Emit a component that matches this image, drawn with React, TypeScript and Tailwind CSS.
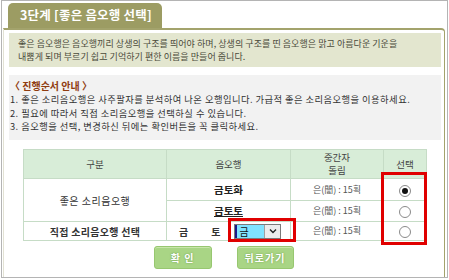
import React from "react";

const rows = [
  { name: "금토화", dol: "은(誾) : 15획", checked: true },
  { name: "금토토", dol: "은(誾) : 15획", checked: false },
];

function Radio({ checked }: { checked?: boolean }) {
  return (
    <span className="inline-flex w-[12px] h-[12px] rounded-full border border-[#8a8a8a] bg-white items-center justify-center align-middle">
      {checked && <span className="w-[6px] h-[6px] rounded-full bg-[#111]" />}
    </span>
  );
}

function GreenButton({ children, w }: { children: React.ReactNode; w: string }) {
  return (
    <button
      className={`${w} h-[23px] rounded-[3px] border border-[#97c770] bg-[#a9d585] text-white text-[10px] font-bold tracking-[1px] [text-shadow:0_0_2px_#6f9a48] shadow-[inset_0_1px_0_#c8e6aa]`}
    >
      {children}
    </button>
  );
}

export default function App() {
  return (
    <div className="relative w-[449px] h-[280px] bg-white font-['Noto_Sans_CJK_KR','Noto_Sans',sans-serif] text-[#444]">
      <div className="ml-[1px] w-[447px] h-[278px] border border-[#b4b4b4] flex flex-col">
        {/* tab */}
        <div className="ml-[6px] mt-[2px] w-[154px] h-[25px] rounded-t-[5px] bg-[#9c9c63] flex items-center pl-[12px] text-white text-[12.5px] font-bold leading-none tracking-[0.2px]">
          3단계 [좋은 음오행 선택]
        </div>
        <div className="ml-[1px] mr-[2px] border-t-2 border-r border-[#a3a36c] border-l border-l-[#e2e2d4] rounded-tr-[4px] flex-1 flex flex-col pl-[5px] pr-[3px]">
          <div className="mt-[3px] h-[34px] bg-[#e3e6cf] pl-[9px] pt-[4px] text-[9px] leading-[13px] text-[#4a4a3a] tracking-[0.05px]">
            <p>좋은 음오행은 음오행끼리 상생의 구조를 띄어야 하며, 상생의 구조를 띤 음오행은 맑고 아름다운 기운을</p>
            <p>내뿜게 되며 부르기 쉽고 기억하기 편한 이름을 만들어 줍니다.</p>
          </div>
          <div className="mt-[8px] h-[65px] bg-[#f2f2f2] pl-[1px] pt-[4px] text-[9.3px] leading-[13.6px] text-[#333] tracking-[0.45px]">
            <p className="text-[10px] font-bold text-[#8f3c10] leading-[14px] tracking-normal">〈 진행순서 안내 〉</p>
            <p>1. 좋은 소리음오행은 사주팔자를 분석하여 나온 오행입니다. 가급적 좋은 소리음오행을 이용하세요.</p>
            <p>2. 필요에 따라서 직접 소리음오행을 선택하실 수 있습니다.</p>
            <p>3. 음오행을 선택, 변경하신 뒤에는 확인버튼을 꼭 클릭하세요.</p>
          </div>

          <table className="mt-[9px] ml-[14px] w-[403px] border-collapse table-fixed text-[9.5px] text-[#444]">
            <colgroup>
              <col className="w-[143px]" />
              <col className="w-[124px]" />
              <col className="w-[93px]" />
              <col className="w-[43px]" />
            </colgroup>
            <thead>
              <tr className="h-[29px] bg-[#d8edd8]">
                <th className="border border-[#c6dcc6] font-normal">구분</th>
                <th className="border border-[#c6dcc6] font-normal">음오행</th>
                <th className="border border-[#c6dcc6] font-normal">
                  <span className="block leading-[13px]">중간자</span>
                  <span className="block leading-[13px]">돌림</span>
                </th>
                <th className="border border-[#c6dcc6] font-normal">선택</th>
              </tr>
            </thead>
            <tbody>
              {rows.map((r, i) => (
                <tr key={r.name} className={i === 0 ? "h-[22px]" : "h-[21px]"}>
                  {i === 0 && (
                    <td rowSpan={2} className="border border-[#c6dcc6] text-center text-[10px] text-[#333] tracking-[0.5px]">
                      좋은 소리음오행
                    </td>
                  )}
                  <td className={`border border-[#c6dcc6] text-center text-[10.5px] font-bold text-[#222] ${i === 1 ? "underline" : ""}`}>
                    {r.name}
                  </td>
                  <td className="border border-[#c6dcc6] text-center text-[9px] text-[#555]">{r.dol}</td>
                  <td className="border border-[#c6dcc6] text-center">
                    <Radio checked={r.checked} />
                  </td>
                </tr>
              ))}
              <tr className="h-[19px]">
                <td className="border border-[#c6dcc6] text-center text-[10px] font-bold text-[#333] tracking-[0.3px]">직접 소리음오행 선택</td>
                <td className="border border-[#c6dcc6] text-[10px] font-bold text-[#333]">
                  <div className="flex items-center">
                    <span className="ml-[12px]">금</span>
                    <span className="ml-[23px]">토</span>
                    <div className="ml-[14px] w-[47px] h-[15px] border border-[#7a7a7a] flex">
                      <span className="flex-1 bg-[#7fe3ff] text-[#111] font-normal text-[10px] leading-[13px] pl-[2px] border-l-2 border-l-[#1a1a8a]">
                        금
                      </span>
                      <span className="w-[16px] bg-[#ececec] border-l border-[#a0a0a0] flex items-center justify-center">
                        <svg width="8" height="6" viewBox="0 0 8 6">
                          <path d="M1 1.5 L4 4.5 L7 1.5" fill="none" stroke="#222" strokeWidth="1.4" />
                        </svg>
                      </span>
                    </div>
                  </div>
                </td>
                <td className="border border-[#c6dcc6] text-center text-[9px] text-[#555]">은(誾) : 15획</td>
                <td className="border border-[#c6dcc6] text-center">
                  <Radio />
                </td>
              </tr>
            </tbody>
          </table>

          <div className="mt-[5px] flex justify-center gap-[25px] pr-[3px]">
            <GreenButton w="w-[58px]">확 인</GreenButton>
            <GreenButton w="w-[57px]">뒤로가기</GreenButton>
          </div>
        </div>
      </div>

      {/* highlight boxes */}
      <div className="absolute left-[381px] top-[172px] w-[46px] h-[73px] border-[3px] border-[#e00000]" />
      <div className="absolute left-[228px] top-[218px] w-[68px] h-[24px] border-[3px] border-[#e00000]" />
    </div>
  );
}
